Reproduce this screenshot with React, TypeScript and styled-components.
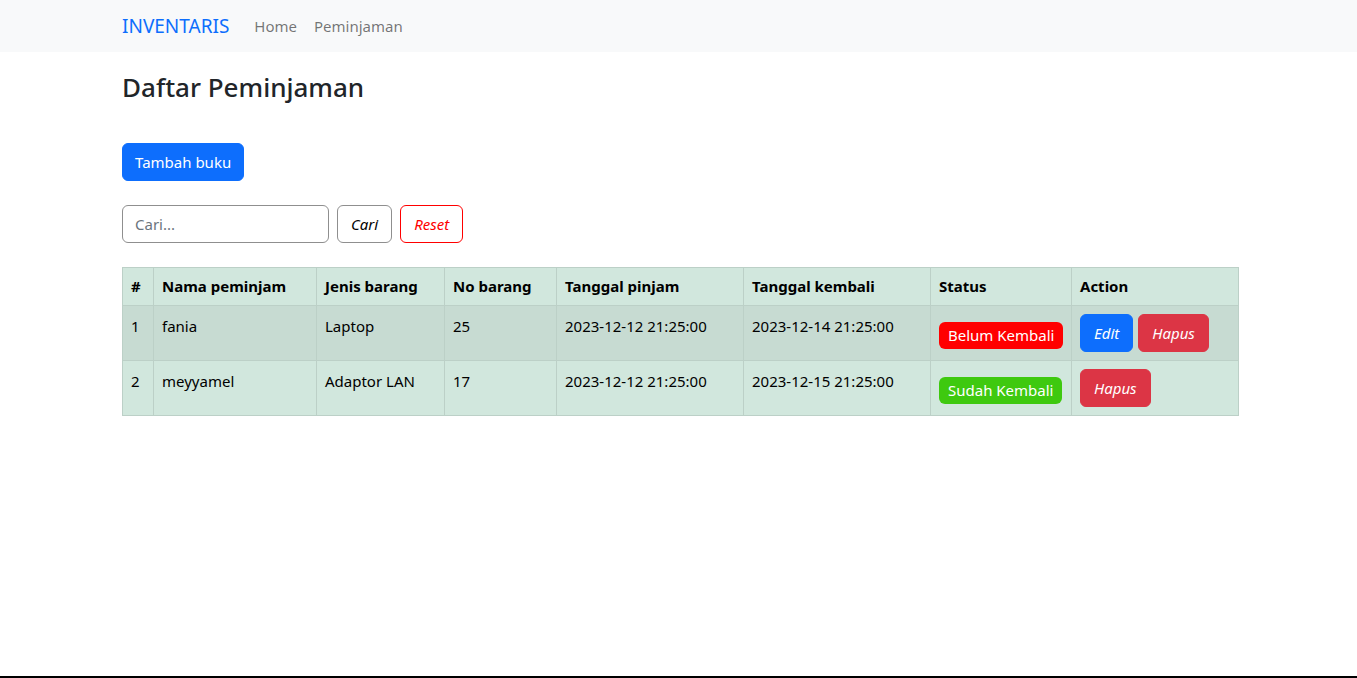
import styled, { createGlobalStyle } from 'styled-components';

const GlobalStyle = createGlobalStyle`
  *, *::before, *::after { box-sizing: border-box; }
  body {
    margin: 0;
    min-height: 100vh;
    border-bottom: 2px solid #000;
    font-family: "Noto Sans", "Open Sans", sans-serif;
    font-size: 15px;
    line-height: 24px;
    color: #212529;
    background: #fff;
  }
`;

const colors = {
  primary: '#0d6efd',
  danger: '#dc3545',
  red: '#ff0000',
  green: '#3ec90f',
  success: '#d1e7dd',
  successStripe: '#c7dbd2',
  tableBorder: '#bcd0c7',
};

const Navbar = styled.nav`
  background: #f8f9fa;
  height: 52px;
  display: flex;
  align-items: center;
`;

const Container = styled.div`
  width: 1116px;
  margin-left: calc(50% - 556.5px);
`;

const NavInner = styled(Container)`
  display: flex;
  align-items: center;
`;

const Brand = styled.a`
  font-size: 19px;
  color: ${colors.primary};
  text-decoration: none;
  margin-right: 25px;
`;

const NavLink = styled.a`
  color: rgba(0, 0, 0, 0.55);
  text-decoration: none;
  margin-right: 17px;
`;

const Title = styled.h3`
  font-size: 26px;
  font-weight: 500;
  line-height: 1.2;
  margin: 20px 0 0;
`;

const Button = styled.button<{ $bg?: string; $border?: string; $color?: string; $italic?: boolean }>`
  font-family: inherit;
  font-size: 15px;
  line-height: 24px;
  padding: 6px ${p => (p.$italic ? '13px' : '12px')};
  border-radius: 6px;
  border: 1px solid ${p => p.$border || p.$bg || 'transparent'};
  background: ${p => p.$bg || 'transparent'};
  color: ${p => p.$color || '#fff'};
  font-style: ${p => (p.$italic ? 'italic' : 'normal')};
  white-space: nowrap;
  cursor: pointer;
`;

const AddRow = styled.div`
  margin-top: 40px;
`;

const SearchForm = styled.form`
  display: flex;
  gap: 8px;
  margin-top: 24px;
`;

const SearchInput = styled.input`
  width: 207px;
  height: 38px;
  padding: 6px 12px;
  font-family: inherit;
  font-size: 15px;
  border: 1px solid #8f8f8f;
  border-radius: 6px;
  &::placeholder { color: #6c757d; }
`;

const Table = styled.table`
  width: 1116px;
  margin-top: 24px;
  border-collapse: collapse;
  table-layout: fixed;
  color: #000;
  th, td {
    border: 1px solid ${colors.tableBorder};
    padding: 8px;
    text-align: left;
    vertical-align: top;
  }
  th { font-weight: 700; line-height: 21px; background: ${colors.success}; }
  tbody tr:nth-child(odd) td { background: ${colors.successStripe}; }
  tbody tr:nth-child(even) td { background: ${colors.success}; }
`;

const Badge = styled.span<{ $bg: string }>`
  display: inline-block;
  margin-top: 8px;
  padding: 1px 9px 2px;
  border-radius: 6px;
  background: ${p => p.$bg};
  color: #fff;
  line-height: 24px;
  white-space: nowrap;
`;

const Actions = styled.div`
  display: flex;
  gap: 5px;
`;

type Loan = {
  id: number;
  nama: string;
  jenis: string;
  no: string;
  pinjam: string;
  kembali: string;
  returned: boolean;
};

const loans: Loan[] = [
  { id: 1, nama: 'fania', jenis: 'Laptop', no: '25', pinjam: '2023-12-12 21:25:00', kembali: '2023-12-14 21:25:00', returned: false },
  { id: 2, nama: 'meyyamel', jenis: 'Adaptor LAN', no: '17', pinjam: '2023-12-12 21:25:00', kembali: '2023-12-15 21:25:00', returned: true },
];

const widths = [31, 163, 128, 112, 187, 187, 141, 167];
const headers = ['#', 'Nama peminjam', 'Jenis barang', 'No barang', 'Tanggal pinjam', 'Tanggal kembali', 'Status', 'Action'];

const App = () => (
  <>
    <GlobalStyle />
    <Navbar>
      <NavInner>
        <Brand href="#">INVENTARIS</Brand>
        <NavLink href="#">Home</NavLink>
        <NavLink href="#">Peminjaman</NavLink>
      </NavInner>
    </Navbar>
    <Container>
      <Title>Daftar Peminjaman</Title>
      <AddRow>
        <Button $bg={colors.primary}>Tambah buku</Button>
      </AddRow>
      <SearchForm onSubmit={e => e.preventDefault()}>
        <SearchInput placeholder="Cari..." />
        <Button $border="#8f8f8f" $color="#000" $italic>Cari</Button>
        <Button type="reset" $border={colors.red} $color={colors.red} $italic>Reset</Button>
      </SearchForm>
      <Table>
        <colgroup>
          {widths.map((w, i) => <col key={i} style={{ width: w }} />)}
        </colgroup>
        <thead>
          <tr>{headers.map(h => <th key={h}>{h}</th>)}</tr>
        </thead>
        <tbody>
          {loans.map(l => (
            <tr key={l.id}>
              <td>{l.id}</td>
              <td>{l.nama}</td>
              <td>{l.jenis}</td>
              <td>{l.no}</td>
              <td>{l.pinjam}</td>
              <td>{l.kembali}</td>
              <td>
                {l.returned
                  ? <Badge $bg={colors.green}>Sudah Kembali</Badge>
                  : <Badge $bg={colors.red}>Belum Kembali</Badge>}
              </td>
              <td>
                <Actions>
                  {!l.returned && <Button $bg={colors.primary} $italic>Edit</Button>}
                  <Button $bg={colors.danger} $italic>Hapus</Button>
                </Actions>
              </td>
            </tr>
          ))}
        </tbody>
      </Table>
    </Container>
  </>
);

export default App;
